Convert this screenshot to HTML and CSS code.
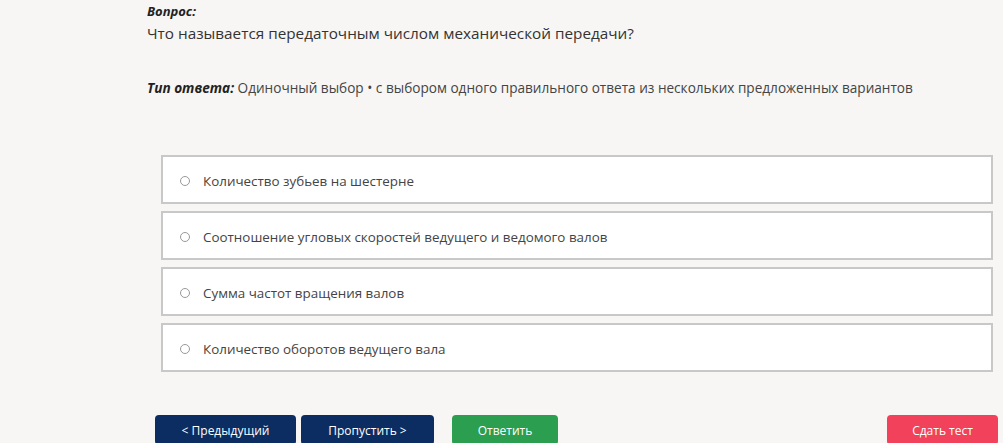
FILE: index.html
```html
<!DOCTYPE html>
<html lang="ru">
<head>
    <meta charset="UTF-8">
    <title>Тест</title>
    <link rel="stylesheet" href="styles.css">
</head>
<body>
    <main class="quiz">
        <div class="question">
            <p class="label">Вопрос:</p>
            <p class="question-text">Что называется передаточным числом механической передачи?</p>
        </div>
        <p class="answer-type"><b>Тип ответа:</b> Одиночный выбор • с выбором одного правильного ответа из нескольких предложенных вариантов</p>

        <div class="options">
            <label class="option"><span class="radio"></span>Количество зубьев на шестерне</label>
            <label class="option"><span class="radio"></span>Соотношение угловых скоростей ведущего и ведомого валов</label>
            <label class="option"><span class="radio"></span>Сумма частот вращения валов</label>
            <label class="option"><span class="radio"></span>Количество оборотов ведущего вала</label>
        </div>

        <div class="actions">
            <button class="btn btn-dark btn-prev">&lt; Предыдущий</button>
            <button class="btn btn-dark btn-skip">Пропустить &gt;</button>
            <button class="btn btn-green">Ответить</button>
            <button class="btn btn-red">Сдать тест</button>
        </div>
    </main>
</body>
</html>
```

FILE: styles.css
```css
/* Общие стили */
body {
    margin: 0;
    background-color: #f7f6f4;
    color: #333;
    font-family: 'Open Sans', 'Noto Sans', sans-serif;
}

.quiz {
    padding: 2px 5px 0 147px;
}

.question p {
    margin: 0;
}

.label {
    font-size: 13px;
    font-weight: bold;
    font-style: italic;
    color: #222;
    line-height: 18px;
}

.question-text {
    font-size: 15.3px;
    line-height: 26px;
    color: #333;
}

.answer-type {
    margin: 32px 0 0;
    font-size: 13.6px;
    line-height: 20px;
    color: #444;
}

.answer-type b {
    font-style: italic;
    color: #222;
}

.options {
    margin: 57px 5px 0 14px;
    display: flex;
    flex-direction: column;
    gap: 7px;
}

.option {
    display: flex;
    align-items: center;
    height: 42px;
    padding: 3px 0 0 17px;
    background-color: white;
    border: 2px solid #c8c8c8;
    font-size: 13.4px;
    color: #444;
}

.radio {
    width: 8px;
    height: 8px;
    border: 1px solid #999;
    border-radius: 50%;
    margin-right: 13px;
}

.actions {
    display: flex;
    margin: 43px 0 0 8px;
}

.btn {
    height: 30px;
    border: none;
    border-radius: 4px;
    color: white;
    font-family: inherit;
    font-size: 12px;
    padding: 0;
}

.btn-dark {
    background-color: #0c2d61;
}

.btn-prev {
    width: 141px;
}

.btn-skip {
    width: 133px;
    margin-left: 5px;
}

.btn-green {
    width: 106px;
    margin-left: 18px;
    background-color: #2b9e4f;
}

.btn-red {
    width: 111px;
    margin-left: auto;
    background-color: #f2415a;
}
```
